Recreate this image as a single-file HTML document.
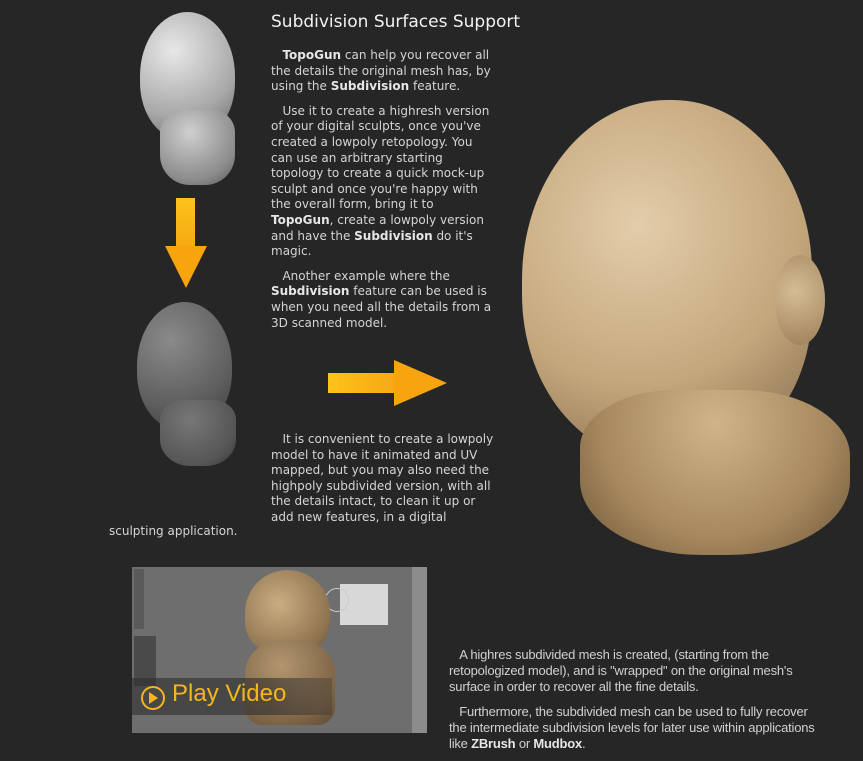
<!DOCTYPE html>
<html><head><style>
body{margin:0;width:863px;height:761px;background:#262626;overflow:hidden;position:relative;font-family:"DejaVu Sans",Verdana,sans-serif;color:#d4d4d4}
.a{position:absolute}
p{margin:0}
.t{font-size:12px;line-height:15.6px;width:228px}
b{color:#e6e6e6}
.n{font-family:"Liberation Sans",Arial,sans-serif;font-size:13px;line-height:16px;letter-spacing:-0.2px;color:#d0d0d0;white-space:nowrap}
</style></head><body>
<div class="a" style="left:271px;top:12px;font-size:17px;color:#f2f2f2">Subdivision Surfaces Support</div>
<div class="a t" style="left:271px;top:48px">
<p>&nbsp;&nbsp;&nbsp;<b>TopoGun</b> can help you recover all<br>the details the original mesh has, by<br>using the <b>Subdivision</b> feature.</p>
<p style="margin-top:9px">&nbsp;&nbsp;&nbsp;Use it to create a highresh version<br>of your digital sculpts, once you've<br>created a lowpoly retopology. You<br>can use an arbitrary starting<br>topology to create a quick mock-up<br>sculpt and once you're happy with<br>the overall form, bring it to<br><b>TopoGun</b>, create a lowpoly version<br>and have the <b>Subdivision</b> do it's<br>magic.</p>
<p style="margin-top:9px">&nbsp;&nbsp;&nbsp;Another example where the<br><b>Subdivision</b> feature can be used is<br>when you need all the details from a<br>3D scanned model.</p>
</div>
<div class="a t" style="left:271px;top:432px;width:240px">&nbsp;&nbsp;&nbsp;It is convenient to create a lowpoly<br>model to have it animated and UV<br>mapped, but you may also need the<br>highpoly subdivided version, with all<br>the details intact, to clean it up or<br>add new features, in a digital</div>
<div class="a t" style="left:109px;top:524px">sculpting application.</div>

<!-- top head -->
<div class="a" style="left:140px;top:12px;width:95px;height:128px;border-radius:50% 50% 45% 45%;background:radial-gradient(circle at 35% 30%,#e8e8e8,#a8a8a8 60%,#606060)"></div>
<div class="a" style="left:160px;top:110px;width:75px;height:75px;border-radius:30% 30% 40% 40%;background:radial-gradient(circle at 40% 30%,#cfcfcf,#8a8a8a 70%,#555)"></div>
<!-- down arrow -->
<div class="a" style="left:176px;top:198px;width:19px;height:50px;background:linear-gradient(#fcc31a,#f7a814)"></div>
<div class="a" style="left:165px;top:246px;width:0;height:0;border-left:21px solid transparent;border-right:21px solid transparent;border-top:42px solid #f7a40f"></div>
<!-- mesh head -->
<div class="a" style="left:137px;top:302px;width:95px;height:128px;border-radius:50% 50% 45% 45%;background:radial-gradient(circle at 35% 30%,#8a8a8a,#5e5e5e 60%,#3a3a3a)"></div>
<div class="a" style="left:160px;top:400px;width:76px;height:66px;border-radius:30% 30% 40% 40%;background:radial-gradient(circle at 40% 30%,#777,#555 70%,#333)"></div>
<!-- right arrow -->
<div class="a" style="left:328px;top:373px;width:68px;height:20px;background:linear-gradient(90deg,#fcc31a,#f7a814)"></div>
<div class="a" style="left:394px;top:360px;width:0;height:0;border-top:23px solid transparent;border-bottom:23px solid transparent;border-left:53px solid #f7a40f"></div>
<!-- big head -->
<div class="a" style="left:522px;top:100px;width:290px;height:360px;border-radius:50% 48% 42% 46%;background:radial-gradient(circle at 40% 35%,#e3cdaa,#c4a67c 55%,#7a6446)"></div>
<div class="a" style="left:775px;top:255px;width:50px;height:90px;border-radius:50%;background:radial-gradient(circle at 40% 40%,#d6bc94,#9a7e58)"></div>
<div class="a" style="left:580px;top:390px;width:270px;height:165px;border-radius:35% 40% 45% 45%;background:radial-gradient(circle at 50% 20%,#cfb48a,#a8895f 60%,#6a5538)"></div>
<!-- video -->
<div class="a" style="left:132px;top:567px;width:295px;height:166px;background:#6e6e6e"></div>
<div class="a" style="left:134px;top:569px;width:10px;height:60px;background:#5a5a5a"></div>
<div class="a" style="left:134px;top:636px;width:22px;height:50px;background:#4a4a4a"></div>
<div class="a" style="left:412px;top:567px;width:15px;height:166px;background:#8c8c8c"></div>
<div class="a" style="left:340px;top:584px;width:48px;height:41px;background:#d8d8d8"></div>
<div class="a" style="left:325px;top:588px;width:22px;height:22px;border:1px solid #ccc;border-radius:50%"></div>
<div class="a" style="left:245px;top:570px;width:85px;height:85px;border-radius:50% 50% 40% 40%;background:radial-gradient(circle at 40% 40%,#c9ad82,#8f7450 70%,#5d4b33)"></div>
<div class="a" style="left:245px;top:640px;width:90px;height:85px;border-radius:40% 40% 20% 20%;background:radial-gradient(circle at 40% 30%,#b39670,#7e6546 70%,#5d4b33)"></div>
<div class="a" style="left:132px;top:678px;width:200px;height:37px;background:linear-gradient(90deg,rgba(45,45,45,.6) 70%,rgba(45,45,45,.3))"></div>
<div class="a" style="left:141px;top:686px;width:24px;height:24px;border:2px solid #f5b51d;border-radius:50%;box-sizing:border-box"></div>
<div class="a" style="left:149px;top:692px;width:0;height:0;border-top:6px solid transparent;border-bottom:6px solid transparent;border-left:9px solid #f5b51d"></div>
<div class="a" style="left:172px;top:680px;font-family:'Liberation Sans',sans-serif;font-size:24px;color:#f5b51d">Play Video</div>

<div class="a n" style="left:449px;top:647px">
<p>&nbsp;&nbsp;&nbsp;A highres subdivided mesh is created, (starting from the<br>retopologized model), and is "wrapped" on the original mesh's<br>surface in order to recover all the fine details.</p>
<p style="margin-top:9px">&nbsp;&nbsp;&nbsp;Furthermore, the subdivided mesh can be used to fully recover<br>the intermediate subdivision levels for later use within applications<br>like <b>ZBrush</b> or <b>Mudbox</b>.</p>
</div>
</body></html>
